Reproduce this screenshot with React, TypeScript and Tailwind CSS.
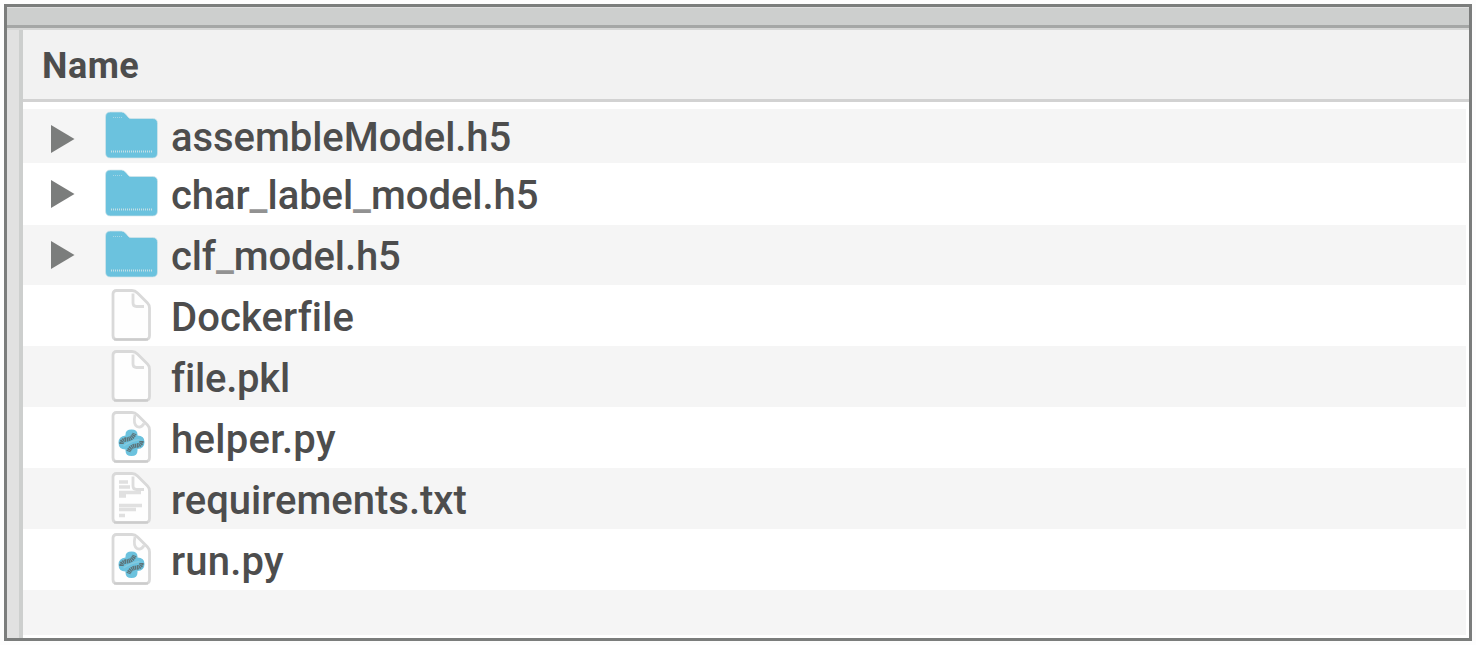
import type { ReactNode } from "react";

type Kind = "folder" | "blank" | "python" | "text";

interface Entry {
  name: string;
  kind: Kind;
  row: string;
  arrow?: string;
  label: string;
}

const entries: Entry[] = [
  { name: "assembleModel.h5", kind: "folder", row: "h-[54px] bg-[#f5f5f5] pb-[2px]", arrow: "mt-2", label: "pt-[5px] tracking-[-0.05px]" },
  { name: "char_label_model.h5", kind: "folder", row: "h-[62px] bg-white pb-[3px]", arrow: "mt-[2px]", label: "pt-[7px] tracking-[-0.05px]" },
  { name: "clf_model.h5", kind: "folder", row: "h-[60px] bg-[#f5f5f5] pb-[2px]", arrow: "mt-[2px]", label: "pt-[6px] tracking-[-0.1px]" },
  { name: "Dockerfile", kind: "blank", row: "h-[61px] bg-white pb-[2px]", label: "pt-[7px] tracking-[0.1px]" },
  { name: "file.pkl", kind: "blank", row: "h-[61px] bg-[#f5f5f5] pb-[2px]", label: "pt-[7px] tracking-[-0.2px]" },
  { name: "helper.py", kind: "python", row: "h-[61px] bg-white pb-[2px]", label: "pt-[7px] tracking-[0.3px]" },
  { name: "requirements.txt", kind: "text", row: "h-[61px] bg-[#f5f5f5] pb-[2px]", label: "pt-[7px]" },
  { name: "run.py", kind: "python", row: "h-[61px] bg-white pb-[2px]", label: "pt-[7px] tracking-[0.2px]" },
];

function Folder() {
  return (
    <svg viewBox="0 0 54 48" className="h-12 w-[54px]">
      <path
        d="M1.500 6Q1.500 1 6.500 1H17.500Q20 1 22 3.500L24 6Q25 7.500 27 7.500H48.500Q53.500 7.500 53.500 12.500V42Q53.500 47 48.500 47H6.500Q1.500 47 1.500 42Z"
        fill="#6bc2de"
        stroke="#d5e5e9"
        strokeWidth="0.700"
      />
      <path d="M7 40.500H48" stroke="#c4dfe6" strokeWidth="1.800" strokeDasharray="1 1" />
      <path d="M9 6.500H19" stroke="#a5d5e4" strokeDasharray="1 1" />
    </svg>
  );
}

function Page({ children, round = false }: { children?: ReactNode; round?: boolean }) {
  return (
    <svg viewBox="0 0 40 52" className="h-[52px] w-10">
      <path
        d="M5.500 1.500H21Q24 1.500 26.500 4L36.500 14Q38.500 16 38.500 19V46.500Q38.500 50.500 34.500 50.500H5.500Q2 50.500 2 46.500V5Q2 1.500 5.500 1.500Z"
        fill="#fefefe"
        stroke="#d9d9d9"
        strokeWidth="2.800"
      />
      {children}
      <path
        d={round ? "M24 4Q22 13 26 15.500Q30 17.500 33 12.500" : "M22 4.500V14Q22 17.500 25.500 17.500H33"}
        fill="none"
        stroke="#dddddd"
        strokeWidth="2.800"
      />
      <path d="M3 50.500H37" stroke="#cccccc" strokeWidth="1.800" />
    </svg>
  );
}

function PythonMark() {
  return (
    <g transform="translate(-0.5 -1)">
      <path
        d="M15 24.500Q15 19.500 21 19.500Q27 19.500 27 24.500V25.500Q34 25.500 34 32Q34 38.500 27 39V40.500Q27 46 21 46Q15 46 15 40.500V39.500Q8 39.500 8 32.500Q8 26.500 15 25.500Z"
        fill="#6bc2de"
      />
      <path
        d="M11 34Q11 30 15.500 29.500Q22 29 24 23.500M31 31Q31 35 26.500 35.500Q20 36 18 41.500"
        fill="none"
        stroke="#5c7378"
        strokeWidth="4.400"
        strokeDasharray="1.400 0.500"
      />
      <path d="M13 36Q20 31 29 29.500" fill="none" stroke="#85c9dd" strokeWidth="1.400" />
    </g>
  );
}

function TextLines() {
  return (
    <g fill="none" stroke="#e0e0e0">
      <path d="M8 10H17M8 15H19M8 20.500H30M8 24H15" strokeWidth="3.500" />
      <path d="M8 33.500H31M8 37.500H25M8 43.500H14" strokeWidth="3.500" />
    </g>
  );
}

function Icon({ kind }: { kind: Kind }) {
  if (kind === "folder") return <Folder />;
  if (kind === "python") return <Page round><PythonMark /></Page>;
  if (kind === "text") return <Page><TextLines /></Page>;
  return <Page />;
}

function Label({ text }: { text: string }) {
  return text.split(/(_)/).map((part, index) =>
    part === "_" ? <span key={index} className="text-[#929292]">_</span> : part,
  );
}

function Row({ entry }: { entry: Entry }) {
  return (
    <li className={`flex items-center ${entry.row}`}>
      <span className="ml-[27px] w-[54px] shrink-0">
        {entry.kind === "folder" && (
          <svg viewBox="0 0 26 30" className={`h-[30px] w-[26px] ${entry.arrow}`}>
            <path d="M1 1L24.500 15L1 29Z" fill="#7b7d7c" />
          </svg>
        )}
      </span>
      <span className="flex w-[54px] shrink-0 justify-center">
        <Icon kind={entry.kind} />
      </span>
      <span className={`ml-[13px] text-[40px] leading-[48px] font-medium whitespace-nowrap text-[#4d4d4d] [font-variant-ligatures:none] ${entry.label}`}>
        <Label text={entry.name} />
      </span>
    </li>
  );
}

export default function App() {
  return (
    <div className="h-[645px] w-[1476px] bg-[#fdfdfd] pt-1 pl-1 font-['Roboto',sans-serif]">
      <div className="flex h-[637px] w-[1468px] flex-col border-[3px] border-[#7b7d7c] bg-white">
        <div className="h-[21px] shrink-0 border-t border-b-[3px] border-t-[#dedede] border-b-[#a5a7a6] bg-[#cdcfce]" />
        <div className="h-[2px] shrink-0 bg-[#d6d7d6]" />
        <div className="flex min-h-0 flex-1">
          <div className="w-4 shrink-0 border-r-4 border-[#cdcfce] bg-[#e1e1e1]" />
          <div className="flex flex-1 flex-col">
            <header className="flex h-[72px] shrink-0 items-center border-b-[3px] border-[#d2d2d2] bg-[#f2f2f2] pl-[19px]">
              <h1 className="pt-[2px] text-[36px] leading-[44px] font-bold tracking-[0.5px] text-[#4d4d4d]">Name</h1>
            </header>
            <ul className="mt-[7px] mr-[3px] flex flex-1 flex-col">
              {entries.map((entry) => (
                <Row key={entry.name} entry={entry} />
              ))}
              <li className="mb-[3px] flex-1 bg-[#f5f5f5]" />
            </ul>
          </div>
        </div>
      </div>
    </div>
  );
}
